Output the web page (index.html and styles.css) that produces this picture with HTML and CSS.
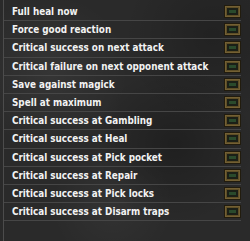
FILE: index.html
```html
<!DOCTYPE html>
<html lang="en">
<head>
  <meta charset="UTF-8">
  <title>Cheats</title>
  <link rel="stylesheet" href="styles.css">
</head>
<body>
  <div class="panel">
    <ul class="list">
      <li class="row"><span class="label">Full heal now</span><span class="box"></span></li>
      <li class="row"><span class="label">Force good reaction</span><span class="box"></span></li>
      <li class="row"><span class="label">Critical success on next attack</span><span class="box"></span></li>
      <li class="row"><span class="label">Critical failure on next opponent attack</span><span class="box"></span></li>
      <li class="row"><span class="label">Save against magick</span><span class="box"></span></li>
      <li class="row"><span class="label">Spell at maximum</span><span class="box"></span></li>
      <li class="row"><span class="label">Critical success at Gambling</span><span class="box"></span></li>
      <li class="row"><span class="label">Critical success at Heal</span><span class="box"></span></li>
      <li class="row"><span class="label">Critical success at Pick pocket</span><span class="box"></span></li>
      <li class="row"><span class="label">Critical success at Repair</span><span class="box"></span></li>
      <li class="row"><span class="label">Critical success at Pick locks</span><span class="box"></span></li>
      <li class="row"><span class="label">Critical success at Disarm traps</span><span class="box"></span></li>
    </ul>
  </div>
</body>
</html>
```

FILE: styles.css
```css
html, body {
  margin: 0;
  padding: 0;
}
body {
  width: 250px;
  height: 241px;
  overflow: hidden;
  background-color: #2a2a2a;
  background-image:
    radial-gradient(circle at 20% 30%, rgba(255,255,255,0.05), transparent 30%),
    radial-gradient(circle at 70% 60%, rgba(0,0,0,0.25), transparent 35%),
    radial-gradient(circle at 45% 85%, rgba(255,255,255,0.04), transparent 25%),
    radial-gradient(circle at 85% 15%, rgba(0,0,0,0.2), transparent 30%);
}
.panel {
  height: 241px;
  margin-left: 3px;
  border-left: 1px solid #4c4c4c;
  padding-top: 3px;
  box-sizing: border-box;
}
.list {
  list-style: none;
  margin: 0;
  padding: 0 9px 0 0;
}
.row {
  display: flex;
  align-items: center;
  justify-content: space-between;
  height: 18.2px;
  box-sizing: border-box;
  border-bottom: 1px solid #464646;
  padding-left: 8px;
}
.label {
  font-family: "DejaVu Sans Condensed", "Liberation Sans", sans-serif;
  font-weight: bold;
  font-size: 9.8px;
  color: #f2f2f2;
  white-space: nowrap;
}
.box {
  width: 17px;
  height: 13px;
  box-sizing: border-box;
  border: 1px solid #221c0e;
  background: #5e4e26;
  box-shadow: inset 0 0 0 1px #736034;
  position: relative;
}
.box::after {
  content: "";
  position: absolute;
  left: 2px;
  top: 2px;
  width: 11px;
  height: 7px;
  box-sizing: border-box;
  border: 2px solid #1b1f17;
  background: #2a4a2c;
}
```
